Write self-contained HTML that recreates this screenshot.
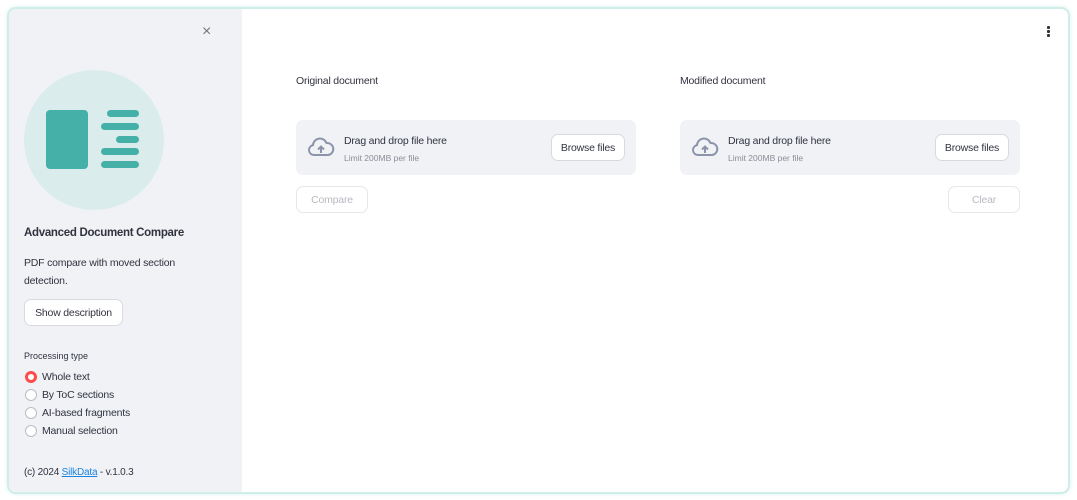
<!DOCTYPE html>
<html><head><style>
*{box-sizing:border-box;margin:0;padding:0}
body{width:1077px;height:500px;background:#fff;font-family:"Liberation Sans",sans-serif;color:#31333f;position:relative;overflow:hidden}
.frame{position:absolute;left:7px;top:7px;width:1063px;height:487px;border:2px solid #cfeee9;border-radius:9px;overflow:hidden;box-shadow:0 0 4px #d6f2ee;background:#fff}
.side{position:absolute;left:0;top:0;width:233px;height:100%;background:#f0f2f6}
.abs{position:absolute}
.t{font-size:10.5px;letter-spacing:-0.2px}
.btn{position:absolute;border:1px solid #d9dadf;border-radius:7px;background:#fff;font-size:10.5px;letter-spacing:-0.2px;display:flex;align-items:center;justify-content:center}
.drop{position:absolute;width:340px;height:55px;background:#f0f2f6;border-radius:7px}
.radio{position:absolute;left:16px;width:12px;height:12px;border-radius:50%;border:1px solid #b9bcc4;background:#fff}
</style></head><body>
<div class="frame">
<div class="side">
 <div class="abs" style="left:193px;top:14px;font-size:16px;color:#777">×</div>
 <div class="abs" style="left:15px;top:61px;width:140px;height:140px;border-radius:50%;background:#dbeced"></div>
 <div class="abs" style="left:37px;top:101px;width:42px;height:59px;border-radius:4px;background:#45b0a7"></div>
 <div class="abs" style="left:98px;top:101px;width:32px;height:7px;border-radius:4px;background:#45b0a7"></div>
 <div class="abs" style="left:92px;top:114px;width:38px;height:7px;border-radius:4px;background:#45b0a7"></div>
 <div class="abs" style="left:107px;top:127px;width:23px;height:7px;border-radius:4px;background:#45b0a7"></div>
 <div class="abs" style="left:92px;top:139px;width:38px;height:7px;border-radius:4px;background:#45b0a7"></div>
 <div class="abs" style="left:92px;top:152px;width:38px;height:7px;border-radius:4px;background:#45b0a7"></div>
 <div class="abs" style="left:15px;top:218px;font-size:11.5px;font-weight:bold;letter-spacing:-0.3px">Advanced Document Compare</div>
 <div class="abs t" style="left:15px;top:245px;line-height:18px">PDF compare with moved section<br>detection.</div>
 <div class="btn" style="left:15px;top:290px;width:99px;height:27px">Show description</div>
 <div class="abs" style="left:15px;top:342px;font-size:9px">Processing type</div>
 <div class="radio" style="top:362px;border:3.5px solid #ff4b4b"></div>
 <div class="abs t" style="left:33px;top:362px">Whole text</div>
 <div class="radio" style="top:380px"></div><div class="abs t" style="left:33px;top:380px">By ToC sections</div>
 <div class="radio" style="top:398px"></div><div class="abs t" style="left:33px;top:398px">AI-based fragments</div>
 <div class="radio" style="top:416px"></div><div class="abs t" style="left:33px;top:416px">Manual selection</div>
 <div class="abs" style="left:15px;top:458px;font-size:10px;letter-spacing:-0.2px">(c) 2024 <span style="color:#1c83e1;text-decoration:underline">SilkData</span> - v.1.0.3</div>
</div>
<div class="abs" style="left:1038px;top:17px;width:3px;height:3px;background:#333;box-shadow:0 4px #333,0 8px #333;border-radius:1px"></div>
<div class="abs t" style="left:287px;top:66px">Original document</div>
<div class="abs t" style="left:671px;top:66px">Modified document</div>
<div class="drop" style="left:287px;top:111px"></div>
<div class="drop" style="left:671px;top:111px"></div>
<svg class="abs" style="left:298px;top:128px" width="28" height="22" viewBox="0 0 28 22"><path d="M7 18a5 5 0 0 1-1-9.9A7 7 0 0 1 19.5 6 5.5 5.5 0 0 1 21 18z" fill="none" stroke="#8b95aa" stroke-width="2"/><path d="M14 16v-6M11 12.5l3-3 3 3" stroke="#8b95aa" stroke-width="2" fill="none"/></svg>
<svg class="abs" style="left:682px;top:128px" width="28" height="22" viewBox="0 0 28 22"><path d="M7 18a5 5 0 0 1-1-9.9A7 7 0 0 1 19.5 6 5.5 5.5 0 0 1 21 18z" fill="none" stroke="#8b95aa" stroke-width="2"/><path d="M14 16v-6M11 12.5l3-3 3 3" stroke="#8b95aa" stroke-width="2" fill="none"/></svg>
<div class="abs t" style="left:335px;top:126px">Drag and drop file here</div>
<div class="abs" style="left:335px;top:144px;font-size:8.5px;color:#8a8d96">Limit 200MB per file</div>
<div class="abs t" style="left:719px;top:126px">Drag and drop file here</div>
<div class="abs" style="left:719px;top:144px;font-size:8.5px;color:#8a8d96">Limit 200MB per file</div>
<div class="btn" style="left:542px;top:125px;width:74px;height:27px">Browse files</div>
<div class="btn" style="left:926px;top:125px;width:74px;height:27px">Browse files</div>
<div class="btn" style="left:287px;top:177px;width:72px;height:27px;color:#b8bac0;border-color:#e6e7ea">Compare</div>
<div class="btn" style="left:939px;top:177px;width:72px;height:27px;color:#b8bac0;border-color:#e6e7ea">Clear</div>
</div>
</body></html>
